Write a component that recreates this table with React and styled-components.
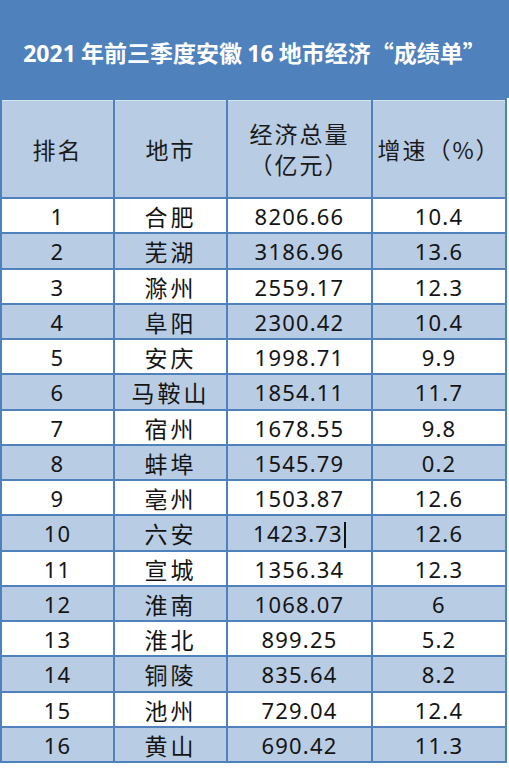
import React from 'react';
import styled, { createGlobalStyle } from 'styled-components';

const GlobalStyle = createGlobalStyle`
  html, body {
    margin: 0;
    padding: 0;
    background: #ffffff;
  }
  body {
    font-family: "Noto Sans", "Noto Sans CJK SC", sans-serif;
    color: #141414;
  }
`;

const Page = styled.div`
  width: 509px;
  height: 768px;
  overflow: hidden;
  background: #ffffff;
`;

const TitleBand = styled.div`
  height: 98px;
  background: #4f81bd;
  display: flex;
  align-items: center;
  justify-content: center;
  padding-top: 6px;
  box-sizing: border-box;
`;

const Title = styled.h1`
  margin: 0;
  font-family: "Noto Sans CJK SC", sans-serif;
  font-size: 23px;
  font-weight: 700;
  color: #ffffff;
  white-space: nowrap;
`;

const Num = styled.span`
  font-family: "Noto Sans", sans-serif;
`;

const Grid = styled.div`
  width: 507px;
  box-sizing: border-box;
  display: grid;
  grid-template-columns: 111px 111px 143px 132px;
  grid-template-rows: 97px;
  grid-auto-rows: 33.25px;
  gap: 2px;
  padding: 2px;
  padding-top: 0;
  background: #4f81bd;
  border-top: 2px solid #4f81bd;
`;

const HeadCell = styled.div`
  background: #b8cce4;
  border-top: 1px solid #d6e3f1;
  display: flex;
  flex-direction: column;
  align-items: center;
  justify-content: center;
  font-family: "Noto Sans CJK SC", sans-serif;
  font-size: 23px;
  line-height: 31px;
  letter-spacing: 2px;
  color: #1a1a1a;
`;

const Cell = styled.div`
  background: ${p => (p.$shaded ? '#b8cce4' : '#ffffff')};
  display: flex;
  align-items: center;
  justify-content: center;
  font-family: ${p => (p.$cjk ? '"Noto Sans CJK SC", sans-serif' : '"Noto Sans", "Noto Sans CJK SC", sans-serif')};
  font-size: ${p => (p.$cjk ? '23px' : '22px')};
  letter-spacing: ${p => (p.$cjk ? '3px' : '1.2px')};
  color: #141414;
  padding-top: 1px;
`;

const Caret = styled.span`
  display: inline-block;
  width: 0;
  height: 26px;
  border-left: 2px solid #111;
  margin-left: 1px;
  margin-bottom: -4px;
`;

const rows = [
  ['1', '合肥', '8206.66', '10.4'],
  ['2', '芜湖', '3186.96', '13.6'],
  ['3', '滁州', '2559.17', '12.3'],
  ['4', '阜阳', '2300.42', '10.4'],
  ['5', '安庆', '1998.71', '9.9'],
  ['6', '马鞍山', '1854.11', '11.7'],
  ['7', '宿州', '1678.55', '9.8'],
  ['8', '蚌埠', '1545.79', '0.2'],
  ['9', '亳州', '1503.87', '12.6'],
  ['10', '六安', '1423.73', '12.6'],
  ['11', '宣城', '1356.34', '12.3'],
  ['12', '淮南', '1068.07', '6'],
  ['13', '淮北', '899.25', '5.2'],
  ['14', '铜陵', '835.64', '8.2'],
  ['15', '池州', '729.04', '12.4'],
  ['16', '黄山', '690.42', '11.3'],
];

const App = () => {
  return (
    <Page>
      <GlobalStyle />
      <TitleBand>
        <Title>
          <Num>2021</Num> 年前三季度安徽 <Num>16</Num> 地市经济“成绩单”
        </Title>
      </TitleBand>
      <Grid>
        <HeadCell>排名</HeadCell>
        <HeadCell>地市</HeadCell>
        <HeadCell>
          <span>经济总量</span>
          <span>（亿元）</span>
        </HeadCell>
        <HeadCell>增速（%）</HeadCell>
        {rows.map((r, i) => {
          const shaded = i % 2 === 1;
          return (
            <React.Fragment key={r[0]}>
              <Cell $shaded={shaded}>{r[0]}</Cell>
              <Cell $shaded={shaded} $cjk>{r[1]}</Cell>
              <Cell $shaded={shaded}>
                {r[2]}
                {r[0] === '10' && <Caret />}
              </Cell>
              <Cell $shaded={shaded}>{r[3]}</Cell>
            </React.Fragment>
          );
        })}
      </Grid>
    </Page>
  );
};

export default App;
